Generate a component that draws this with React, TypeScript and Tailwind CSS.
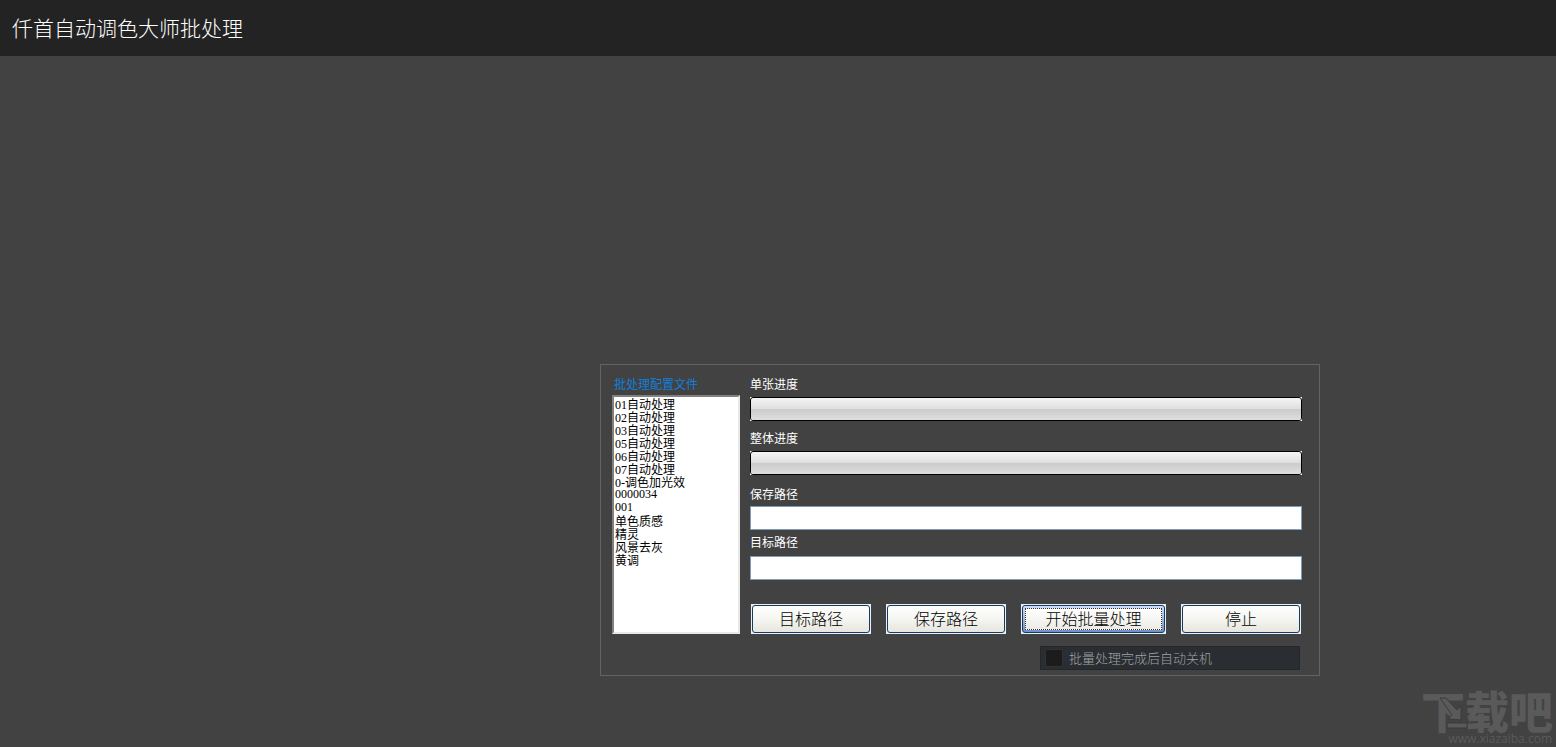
import { ReactNode, useState } from "react";
import clsx from "clsx";

const profiles = [
  "01自动处理",
  "02自动处理",
  "03自动处理",
  "05自动处理",
  "06自动处理",
  "07自动处理",
  "0-调色加光效",
  "0000034",
  "001",
  "单色质感",
  "精灵",
  "风景去灰",
  "黄调",
];

const ProgressField = ({ id, label, value }: { id: string; label: string; value: number }) => (
  <div>
    <div id={id} className="leading-5">
      {label}
    </div>
    <div
      role="progressbar"
      aria-labelledby={id}
      aria-valuenow={value}
      aria-valuemin={0}
      aria-valuemax={100}
      className="mt-[3px] h-6 bg-white"
    >
      <div className="h-full overflow-hidden rounded-[3px] border border-black bg-linear-to-b from-[#f4f4f4] from-0% via-[#dedede] via-50% to-[#e0e0e0]">
        <div className="h-full bg-linear-to-b from-transparent from-50% via-[#cbcbcb] via-50% to-[#dedede]">
          <div className="h-full bg-green-500" style={{ width: `${value}%` }} />
        </div>
      </div>
    </div>
  </div>
);

const PathField = ({
  id,
  label,
  className,
}: {
  id: string;
  label: string;
  className: string;
}) => {
  const [path, setPath] = useState("");

  return (
    <div className={clsx("flex flex-col", className)}>
      <label htmlFor={id} className="leading-5">
        {label}
      </label>
      <input
        id={id}
        type="text"
        value={path}
        onChange={(e) => setPath(e.target.value)}
        className="h-6 w-full border border-[#7f9db9] bg-white px-1 text-black outline-none"
      />
    </div>
  );
};

const XpButton = ({
  children,
  active = false,
  wide = false,
}: {
  children: ReactNode;
  active?: boolean;
  wide?: boolean;
}) => (
  <button
    type="button"
    className={clsx(
      "flex h-[30px] border border-[#e4f0fa] bg-[#e4f0fa] text-base font-light text-black",
      wide ? "w-[145px]" : "w-[120px]"
    )}
  >
    <span
      className={clsx(
        "flex h-full w-full items-center justify-center rounded-[3px] border border-[#1c3a5c]",
        active
          ? "bg-linear-to-b from-[#cfe0fb] to-[#6f8fc8] p-0.5"
          : "bg-linear-to-b from-white via-[#f5f5f1] to-[#e6e5df]"
      )}
    >
      <span
        className={clsx(
          "flex h-full w-full items-center justify-center pb-0.5 leading-none",
          active && "border border-dotted border-[#333] bg-linear-to-b from-white to-[#ecebe6]"
        )}
      >
        {children}
      </span>
    </span>
  </button>
);

const Watermark = () => (
  <div className="pointer-events-none absolute right-1 bottom-0 w-[131px] font-black text-[#5a5a5a] select-none">
    <div className="text-[44px] leading-[42px] whitespace-nowrap">下载吧</div>
    <svg viewBox="0 0 50 44" className="absolute top-0 left-0 h-11 w-[50px]" fill="#5a5a5a">
      <path d="M19 9H25L36 21 40 17V31L27 30 31 26Z" stroke="#3a3a3a" />
      <path d="M26 34H46V39H26Z" stroke="#3a3a3a" />
    </svg>
    <div className="text-right font-['Open_Sans',sans-serif] text-xs leading-4 font-normal">
      www.xiazaiba.com
    </div>
  </div>
);

const App = () => {
  const [shutdown, setShutdown] = useState(false);

  return (
    <div className="relative flex min-h-screen flex-col bg-[#424242] font-['Noto_Sans_CJK_SC',sans-serif] text-xs text-white">
      <header className="flex h-14 items-center bg-[#232323] px-3 pb-0.5">
        <h1 className="text-[21px] font-light">仟首自动调色大师批处理</h1>
      </header>

      <main className="flex flex-1 items-end justify-end pr-59 pb-[71px]">
        <section className="flex w-full max-w-[720px] gap-2.5 border border-[#636363] pt-[9px] pr-[17px] pb-[5px] pl-[11px]">
          <div className="flex w-32 flex-col">
            <label htmlFor="profiles" className="pl-0.5 leading-5 text-[#0f7fdc]">
              批处理配置文件
            </label>
            <select
              id="profiles"
              size={13}
              className="mt-px h-[239px] w-full overflow-hidden border-2 border-t-[#808080] border-r-[#e8e8e8] border-b-[#e8e8e8] border-l-[#808080] bg-white font-['Liberation_Serif','Noto_Sans_CJK_SC',serif] text-black outline-none"
            >
              {profiles.map((name) => (
                <option
                  key={name}
                  className="flex h-[13px] min-h-0 items-center px-px py-0 leading-[13px]"
                >
                  {name}
                </option>
              ))}
            </select>
          </div>

          <div className="flex flex-1 flex-col">
            <div className="flex flex-col gap-[7px]">
              <ProgressField id="single" label="单张进度" value={0} />
              <ProgressField id="total" label="整体进度" value={0} />
            </div>
            <PathField id="save-path" label="保存路径" className="mt-[9px] gap-0.5" />
            <PathField id="target-path" label="目标路径" className="mt-0.5 gap-1" />

            <div className="mt-6 flex justify-between px-px">
              <XpButton>目标路径</XpButton>
              <XpButton>保存路径</XpButton>
              <XpButton active wide>
                开始批量处理
              </XpButton>
              <XpButton>停止</XpButton>
            </div>

            <label className="mt-3 mr-0.5 flex h-6 w-65 items-center gap-1.5 self-end border border-[#24272a] bg-[#2a2e32] px-1 text-[13px] font-light text-[#a0a3a5]">
              <input
                type="checkbox"
                checked={shutdown}
                onChange={(e) => setShutdown(e.target.checked)}
                className="size-[18px] appearance-none rounded-xs border border-[#303234] bg-[#1c1c1c] checked:bg-[#8f9294]"
              />
              批量处理完成后自动关机
            </label>
          </div>
        </section>
      </main>

      <Watermark />
    </div>
  );
};

export default App;
